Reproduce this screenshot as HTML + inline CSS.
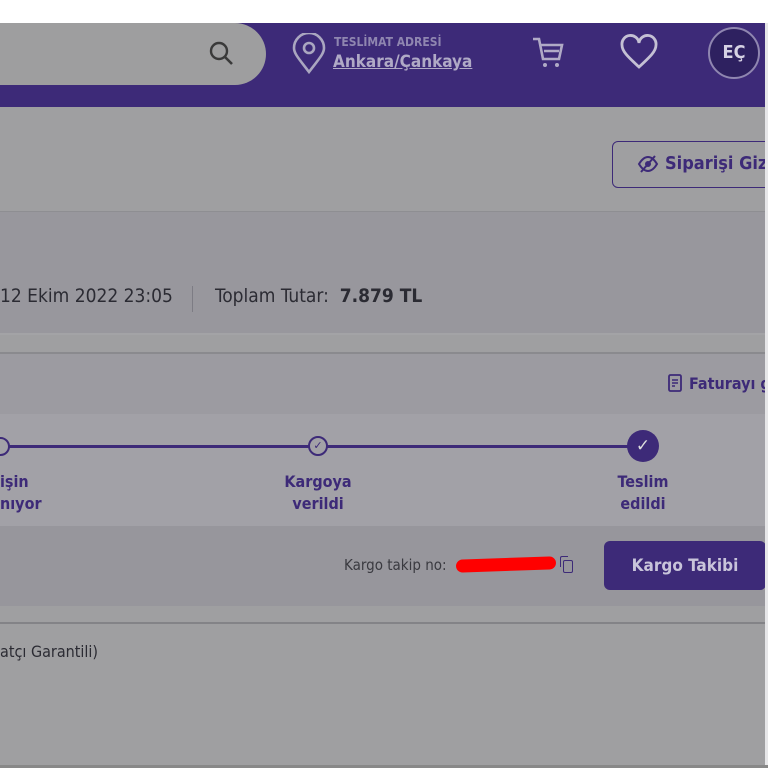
<!DOCTYPE html>
<html><head><meta charset="utf-8"><style>
*{margin:0;padding:0;box-sizing:border-box}
body{width:768px;height:768px;overflow:hidden;background:#9f9fa1;font-family:"Liberation Sans",sans-serif;position:relative}
.a{position:absolute;white-space:nowrap}
.t{font-family:"DejaVu Sans Condensed","Liberation Sans",sans-serif}
</style></head><body>
<div class="a" style="left:0;top:0;width:768px;height:23px;background:#fff"></div>
<div class="a" style="left:0;top:23px;width:765px;height:84px;background:#3d2a78"></div>
<div class="a" style="left:0;top:23px;width:266px;height:62px;background:#9e9e9f;border-radius:0 31px 31px 0"></div>
<svg class="a" style="left:205px;top:38px" width="32" height="32" viewBox="0 0 32 32"><circle cx="14" cy="13" r="8" fill="none" stroke="#3a3a3a" stroke-width="2.4"/><line x1="20" y1="19" x2="27" y2="26" stroke="#3a3a3a" stroke-width="2.6"/></svg>
<svg class="a" style="left:291px;top:33px" width="36" height="42" viewBox="0 0 36 42"><path d="M18 39C9 27 3 21 3 15a15 15 0 0 1 30 0c0 6-6 12-15 24z" fill="none" stroke="#aaa6c0" stroke-width="2.6"/><circle cx="18" cy="15" r="5" fill="none" stroke="#aaa6c0" stroke-width="2.6"/></svg>
<div class="a t" style="left:334px;top:35px;font-size:12px;font-weight:bold;color:#8f86b0">TESLİMAT ADRESİ</div>
<div class="a t" style="left:333px;top:52px;font-size:17px;font-weight:bold;color:#b0aac6;text-decoration:underline">Ankara/Çankaya</div>
<svg class="a" style="left:530px;top:35px" width="36" height="36" viewBox="0 0 36 36"><path d="M3 4h6l4 20h16l3-14H11M14 10h17M14 16h15" fill="none" stroke="#b0aac6" stroke-width="2.6"/><circle cx="15" cy="30" r="2" fill="#b0aac6"/><circle cx="27" cy="30" r="2" fill="#b0aac6"/></svg>
<svg class="a" style="left:619px;top:34px" width="40" height="36" viewBox="0 0 40 36"><path d="M20 33C8 22 3 17 3 11a8.5 8.5 0 0 1 17-2 8.5 8.5 0 0 1 17 2c0 6-5 11-17 22z" fill="none" stroke="#c4c0d4" stroke-width="2.8"/></svg>
<div class="a t" style="left:708px;top:27px;width:52px;height:52px;border-radius:50%;border:2px solid #8f86b0;background:#2e2160;color:#d6d2e4;font-size:18px;font-weight:bold;text-align:center;line-height:48px">EÇ</div>
<div class="a" style="left:612px;top:141px;width:170px;height:47px;border:1.5px solid #3d2a78;border-radius:6px"></div>
<svg class="a" style="left:637px;top:155px" width="22" height="18" viewBox="0 0 22 18"><path d="M2 9c3-5 6-7 9-7s6 2 9 7c-3 5-6 7-9 7s-6-2-9-7z" fill="none" stroke="#3d2a78" stroke-width="2"/><circle cx="11" cy="9" r="3" fill="#3d2a78"/><line x1="4" y1="17" x2="18" y2="1" stroke="#3d2a78" stroke-width="2"/></svg>
<div class="a t" style="left:665px;top:153px;font-size:18px;font-weight:bold;color:#3d2a78">Siparişi Giz</div>
<div class="a" style="left:0;top:211px;width:765px;height:1px;background:#8e8e92"></div>
<div class="a" style="left:0;top:212px;width:765px;height:121px;background:#98979d"></div>
<div class="a t" style="left:0;top:285px;font-size:19px;color:#2b2b33">12 Ekim 2022 23:05</div>
<div class="a" style="left:192px;top:286px;width:1px;height:26px;background:#7d7c84"></div>
<div class="a t" style="left:215px;top:285px;font-size:19px;color:#2b2b33">Toplam Tutar: &nbsp;<b>7.879 TL</b></div>
<div class="a" style="left:0;top:333px;width:765px;height:2px;background:#a3a3a6"></div>
<div class="a" style="left:0;top:352px;width:765px;height:2px;background:#8a8a8e"></div>
<div class="a" style="left:0;top:354px;width:765px;height:60px;background:#9c9ba1"></div>
<div class="a" style="left:0;top:414px;width:765px;height:112px;background:#a2a1a7"></div>
<svg class="a" style="left:668px;top:374px" width="14" height="18" viewBox="0 0 14 18"><rect x="1" y="1" width="12" height="16" rx="1.5" fill="none" stroke="#3d2a78" stroke-width="1.8"/><path d="M4 6h6M4 9h6M4 12h3" stroke="#3d2a78" stroke-width="1.5"/></svg>
<div class="a t" style="left:689px;top:374px;font-size:16px;font-weight:bold;color:#3d2a78">Faturayı g</div>
<div class="a" style="left:0;top:445px;width:643px;height:3px;background:#3d2a78"></div>
<div class="a" style="left:-9px;top:437px;width:19px;height:19px;border-radius:50%;border:2px solid #3d2a78;background:#a2a1a7"></div>
<div class="a" style="left:308px;top:436px;width:20px;height:20px;border-radius:50%;border:2px solid #3d2a78;background:#a2a1a7;color:#3d2a78;font-size:11px;text-align:center;line-height:16px">✓</div>
<div class="a" style="left:627px;top:430px;width:32px;height:32px;border-radius:50%;background:#3d2a78;color:#ddd;font-size:17px;text-align:center;line-height:32px">✓</div>
<div class="a t" style="left:0;top:471px;font-size:16px;font-weight:bold;color:#3d2a78;line-height:22px">işin<br>nıyor</div>
<div class="a t" style="left:268px;top:471px;width:100px;text-align:center;font-size:16px;font-weight:bold;color:#3d2a78;line-height:22px">Kargoya<br>verildi</div>
<div class="a t" style="left:593px;top:471px;width:100px;text-align:center;font-size:16px;font-weight:bold;color:#3d2a78;line-height:22px">Teslim<br>edildi</div>
<div class="a" style="left:0;top:526px;width:765px;height:80px;background:#97969c"></div>
<div class="a t" style="left:344px;top:556px;font-size:15px;color:#3a3a40">Kargo takip no:</div>
<div class="a" style="left:456px;top:558px;width:100px;height:13px;background:#f00;border-radius:7px;transform:rotate(-2deg)"></div>
<div class="a" style="left:560px;top:556px;width:8px;height:11px;border-left:1.6px solid #3d2a78;border-top:1.6px solid #3d2a78;border-radius:2px 0 0 0"></div>
<div class="a" style="left:563px;top:560px;width:10px;height:13px;border:1.6px solid #3d2a78;border-radius:2px"></div>
<div class="a" style="left:604px;top:541px;width:162px;height:49px;background:#3d2a78;border-radius:6px"></div>
<div class="a t" style="left:604px;top:556px;width:162px;text-align:center;font-size:17px;font-weight:bold;color:#c8c4da">Kargo Takibi</div>
<div class="a" style="left:0;top:622px;width:765px;height:2px;background:#838387"></div>
<div class="a t" style="left:0;top:642px;font-size:16px;color:#2b2b33">atçı Garantili)</div>
<div class="a" style="left:765px;top:23px;width:3px;height:745px;background:#e6e6e8"></div>
<div class="a" style="left:0;top:765px;width:768px;height:3px;background:#888"></div>
</body></html>
